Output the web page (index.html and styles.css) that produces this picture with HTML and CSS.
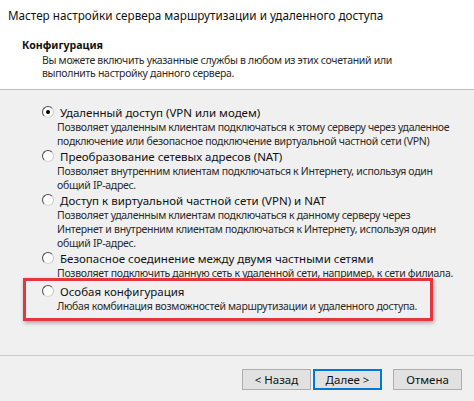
FILE: index.html
```html
<!DOCTYPE html>
<html lang="ru">
<head>
<meta charset="utf-8">
<title>Мастер настройки сервера маршрутизации</title>
<link rel="stylesheet" href="styles.css">
</head>
<body>
<div class="dialog">
  <header class="head">
    <div class="title">Мастер настройки сервера маршрутизации и удаленного доступа</div>
    <div class="section-title">Конфигурация</div>
    <div class="section-desc">Вы можете включить указанные службы в любом из этих сочетаний или<br>выполнить настройку данного сервера.</div>
  </header>
  <main class="options">
    <div class="option">
      <div class="label"><span class="radio checked"></span>Удаленный доступ (VPN или модем)</div>
      <div class="desc">Позволяет удаленным клиентам подключаться к этому серверу через удаленное<br>подключение или безопасное подключение виртуальной частной сети (VPN)</div>
    </div>
    <div class="option">
      <div class="label"><span class="radio"></span>Преобразование сетевых адресов (NAT)</div>
      <div class="desc">Позволяет внутренним клиентам подключаться к Интернету, используя один<br>общий IP-адрес.</div>
    </div>
    <div class="option">
      <div class="label"><span class="radio"></span>Доступ к виртуальной частной сети (VPN) и NAT</div>
      <div class="desc">Позволяет удаленным клиентам подключаться к данному серверу через<br>Интернет и внутренним клиентам подключаться к Интернету, используя один<br>общий IP-адрес.</div>
    </div>
    <div class="option">
      <div class="label"><span class="radio"></span>Безопасное соединение между двумя частными сетями</div>
      <div class="desc">Позволяет подключить данную сеть к удаленной сети, например, к сети филиала.</div>
    </div>
    <div class="highlight">
      <div class="option">
        <div class="label"><span class="radio"></span>Особая конфигурация</div>
        <div class="desc">Любая комбинация возможностей маршрутизации и удаленного доступа.</div>
      </div>
    </div>
  </main>
  <footer class="foot">
    <button class="btn">&lt; Назад</button>
    <button class="btn default">Далее &gt;</button>
    <button class="btn cancel">Отмена</button>
  </footer>
</div>
</body>
</html>
```
FILE: styles.css
```css
html, body {
  margin: 0;
  padding: 0;
  background: #f0f0f0;
}
body {
  font-family: "Noto Sans", "Open Sans", sans-serif;
  font-size: 11px;
  color: #1a1a1a;
}
.dialog {
  width: 474px;
  height: 401px;
  overflow: hidden;
  display: flex;
  flex-direction: column;
}
.head {
  background: #ffffff;
  border-bottom: 1px solid #bdbdbd;
  padding-top: 8px;
  box-sizing: border-box;
  height: 90px;
}
.title {
  padding-left: 8px;
  font-size: 11.7px;
  line-height: 14px;
  color: #111;
  white-space: nowrap;
}
.section-title {
  margin-top: 16px;
  padding-left: 22px;
  font-size: 10.6px;
  line-height: 14px;
  font-weight: 700;
  color: #111;
}
.section-desc {
  padding-left: 42px;
  margin-top: 2px;
  font-size: 10.5px;
  letter-spacing: -0.3px;
  line-height: 12.5px;
  color: #2a2a2a;
  white-space: nowrap;
}
.options {
  height: 265px;
  box-sizing: border-box;
  padding: 14px 0 0 23px;
}
.option {
  margin-left: 19px;
}
.label {
  display: flex;
  align-items: center;
  height: 16px;
  font-size: 11.5px;
  white-space: nowrap;
  color: #111;
}
.radio {
  width: 12px;
  height: 12px;
  box-sizing: border-box;
  border-radius: 50%;
  border: 1px solid;
  border-color: #4a4a4a #c9c9c9 #d6d6d6 #4a4a4a;
  background: #fdfdfd;
  margin-right: 6px;
  display: flex;
  align-items: center;
  justify-content: center;
  flex: none;
}
.radio.checked::after {
  content: "";
  width: 4px;
  height: 4px;
  border-radius: 50%;
  background: #000;
}
.desc {
  padding-left: 15px;
  font-size: 10.5px;
  letter-spacing: -0.3px;
  line-height: 14px;
  white-space: nowrap;
  color: #2a2a2a;
}
.highlight {
  width: 410px;
  box-sizing: border-box;
  margin-top: -2px;
  padding: 2px 0 5px 0;
  border: 3px solid #e4363c;
  box-shadow: 1px 2px 4px rgba(0, 0, 0, 0.3);
  position: relative;
}
.highlight .option {
  margin-left: 16px;
}
.foot {
  border-top: 1px solid #c9c9c9;
  flex: 1;
  display: flex;
  justify-content: flex-end;
  align-items: flex-start;
  padding: 13px 12px 0 0;
  gap: 2px;
}
.btn {
  width: 69px;
  height: 21px;
  box-sizing: border-box;
  font-family: inherit;
  font-size: 11.5px;
  color: #111;
  background: #e1e1e1;
  border: 1px solid #adadad;
  padding: 0;
  margin: 0;
}
.btn.default {
  border: 1px solid #0078d7;
  box-shadow: inset 0 0 0 1px #0078d7;
}
.btn.cancel {
  margin-left: 9px;
}
```
